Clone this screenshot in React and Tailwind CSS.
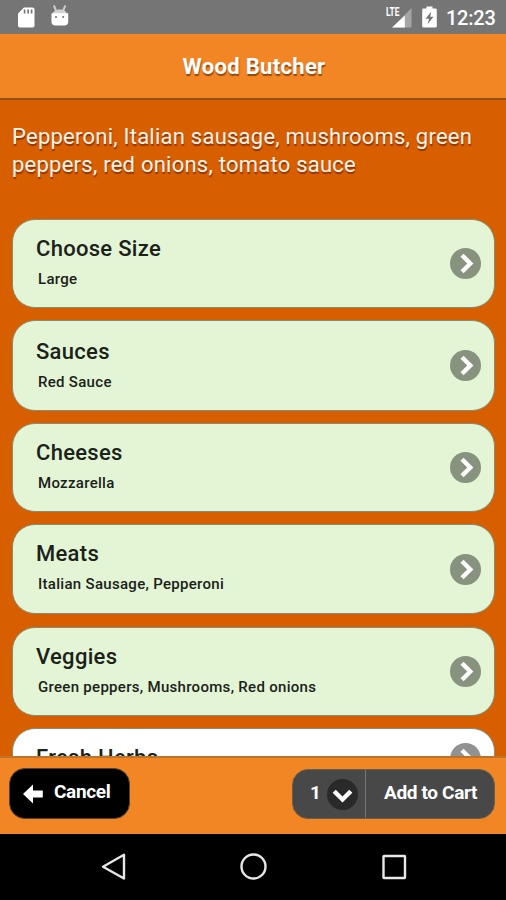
const OPTIONS = [
  { title: "Choose Size", value: "Large", slot: "h-[101px]", card: "h-[89px]", text: "pt-[15px]" },
  { title: "Sauces", value: "Red Sauce", slot: "h-[103px]", card: "h-[91px]", text: "pt-[17px]" },
  { title: "Cheeses", value: "Mozzarella", slot: "h-[101px]", card: "h-[89px]", text: "pt-[15px]" },
  { title: "Meats", value: "Italian Sausage, Pepperoni", slot: "h-[103px]", card: "h-[90px]", text: "pt-[15px]" },
  { title: "Veggies", value: "Green peppers, Mushrooms, Red onions", slot: "h-[101px]", card: "h-[89px]", text: "pt-[15px]" },
  { title: "Fresh Herbs", value: "", slot: "h-[73px]", card: "h-[60px]", text: "pt-[15px]", plain: true },
];

function StatusBar() {
  return (
    <div className="flex h-[34px] shrink-0 items-start bg-[#757575] text-white">
      <svg className="ml-[17px] mt-[7px] h-[21px] w-[18px]" viewBox="0 0 18 21">
        <path d="M7 0.5h8.5a2 2 0 0 1 2 2v16a2 2 0 0 1-2 2H3a2 2 0 0 1-2-2V6.5z" fill="#fff" />
        <path d="M7.6 2.5v4M11.2 2.5v4M14.6 2.5v4" stroke="#757575" strokeWidth="1.7" />
      </svg>
      <svg className="ml-[15px] mt-[5px] h-[22px] w-[20px]" viewBox="0 0 20 22">
        <path d="M4.2 1.2l1.8 4.5M15 1.2l-1.8 4.5" stroke="#d0d0d0" strokeWidth="2" strokeLinecap="round" />
        <path d="M2.5 9.2C3 2.8 16.5 2.8 17 9.2z" fill="#d2d2d2" />
        <path d="M1.5 8.2h16.7v8.3a4 4 0 0 1-4 4H5.5a4 4 0 0 1-4-4z" fill="#fff" />
        <circle cx="6" cy="12" r="1.1" fill="#757575" />
        <circle cx="13.2" cy="12" r="1.1" fill="#757575" />
      </svg>
      <svg className="ml-auto mt-[6px] h-[22px] w-[28px] overflow-visible" viewBox="0 0 28 22">
        <path d="M25.5 2v19.5H6.5z" fill="#a5a5a5" />
        <path d="M0 0H14.5V11.5H0z" fill="#757575" />
        <path d="M18.8 9.5v12H6z" fill="#fff" />
        <text x="0" y="10.3" fontFamily="Roboto, sans-serif" fontSize="12.5" fontWeight="700" textLength="13.5" lengthAdjust="spacingAndGlyphs" fill="#fff">LTE</text>
      </svg>
      <svg className="ml-[8px] mt-[6px] h-[22px] w-[16px]" viewBox="0 0 16 22">
        <path d="M4.5 0.5h6v2h3a1.3 1.3 0 0 1 1.3 1.3v16.4a1.3 1.3 0 0 1-1.3 1.3h-12a1.3 1.3 0 0 1-1.3-1.3V3.8a1.3 1.3 0 0 1 1.3-1.3h3z" fill="#fff" />
        <path d="M9.2 5.5L3.6 12.8h3.5l-1.6 5.5L11.6 10.8H8.2z" fill="#757575" />
      </svg>
      <span className="ml-[8px] mr-[10px] mt-[6px] w-[50px] whitespace-nowrap text-[20px] font-medium leading-[25px] tracking-[-0.25px]">12:23</span>
    </div>
  );
}

function OptionCard({ title, value, slot, card, text, plain }) {
  return (
    <div className={`w-full shrink-0 ${slot}`}>
      <div className={`flex items-center rounded-[23px] border border-[#858b76] pl-[23px] pr-[13px] ${card} ${plain ? "bg-white" : "bg-[#e3f5d5]"}`}>
        <div className={`h-full flex-1 whitespace-nowrap text-[#1b211b] ${text}`}>
          <div className="text-[22px] font-medium leading-[28px] tracking-[0.3px]">{title}</div>
          {value && <div className="ml-[2px] mt-[6px] text-[15px] font-medium leading-[20px] tracking-[0.3px]">{value}</div>}
        </div>
        <svg className="h-[31px] w-[31px]" viewBox="0 0 31 31">
          <circle cx="15.5" cy="15.5" r="15.5" fill={plain ? "#929292" : "#87937e"} />
          <path d="M12 7.2l8.3 8.3-8.3 8.3" fill="none" stroke="#fff" strokeWidth="4.4" />
        </svg>
      </div>
    </div>
  );
}

export default function App() {
  return (
    <div className="flex h-[900px] w-[506px] flex-col overflow-hidden bg-black font-[Roboto,sans-serif]">
      <StatusBar />
      <header className="flex h-[66px] shrink-0 justify-center border-b-2 border-[#935016] bg-[#f28524] pl-[2px] pt-[19px]">
        <h1 className="whitespace-nowrap text-[22px] font-bold leading-[28px] tracking-[0.32px] text-white [text-shadow:0.5px_1.5px_1px_rgba(80,30,0,0.6)]">Wood Butcher</h1>
      </header>
      <main className="flex h-[656px] shrink-0 flex-col overflow-hidden bg-[#d85f00] pl-[12px] pr-[11px] pt-[22px]">
        <p className="h-[97px] shrink-0 whitespace-nowrap pt-[0.5px] text-[22px] leading-[28px] tracking-[0.24px] text-[#fff3eb] [text-shadow:0.5px_1.5px_1px_rgba(90,20,0,0.6)]">
          Pepperoni, Italian sausage, mushrooms, green
          <br />
          peppers, red onions, tomato sauce
        </p>
        {OPTIONS.map((option) => (
          <OptionCard key={option.title} {...option} />
        ))}
      </main>
      <footer className="flex h-[78px] shrink-0 justify-between border-t-2 border-[#bd7428] bg-[#f28524] pl-[9px] pr-[11px] pt-[10px] text-[19px] font-bold leading-[26px] tracking-[-0.35px] text-white">
        <button className="flex h-[51px] w-[121px] items-center rounded-[16px] border border-[#57422a] bg-black">
          <svg className="ml-[13px] h-[20px] w-[20px]" viewBox="0 0 20 20">
            <path d="M0 10L10 0.5V6.5H19.8V13.5H10V19.5z" fill="#fff" />
          </svg>
          <span className="ml-[11px] mt-[-4px] whitespace-nowrap">Cancel</span>
        </button>
        <div className="mt-[1px] flex h-[50px] w-[203px] overflow-hidden rounded-[16px] border border-[#68604f] bg-[#484848]">
          <button className="flex w-[73px] shrink-0 items-center border-r border-[#777]">
            <span className="ml-[17px] mt-[-3px] w-[17px] text-left">1</span>
            <svg className="h-[31px] w-[31px]" viewBox="0 0 31 31">
              <circle cx="15.5" cy="15.5" r="15.5" fill="#292929" />
              <path d="M7.2 12.3l8.3 8.2 8.3-8.2" fill="none" stroke="#fff" strokeWidth="4.4" />
            </svg>
          </button>
          <button className="whitespace-nowrap pb-[3px] pl-[18px]">Add to Cart</button>
        </div>
      </footer>
      <nav className="h-[66px] shrink-0 bg-black">
        <svg className="h-[66px] w-[506px]" viewBox="0 0 506 66" fill="none" stroke="#e8e8e8" strokeWidth="2.4" strokeLinejoin="round">
          <path d="M103 32.7L124 20.8V44.5z" />
          <circle cx="253.5" cy="32.5" r="12" />
          <rect x="383.5" y="22" width="21.5" height="22" rx="0.5" />
        </svg>
      </nav>
    </div>
  );
}
